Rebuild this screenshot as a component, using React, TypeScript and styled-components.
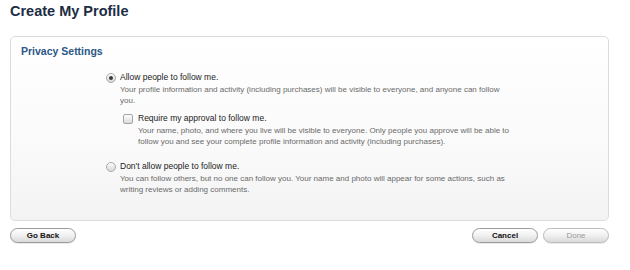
import styled, { createGlobalStyle } from "styled-components";

const GlobalStyle = createGlobalStyle`
  html, body {
    margin: 0;
    padding: 0;
    background: #fff;
    font-family: "Liberation Sans", Arial, sans-serif;
  }
`;

const StyledPage = styled.main`
  width: 630px;
  height: 270px;
  padding: 0 21px 0 10px;
  box-sizing: border-box;
`;

const StyledTitle = styled.h1`
  margin: 0;
  padding-top: 3px;
  height: 33px;
  font-size: 14.5px;
  font-weight: bold;
  color: #1c2d44;
`;

const StyledPanel = styled.section`
  height: 185px;
  box-sizing: border-box;
  border: 1px solid #dcdcdc;
  border-radius: 5px;
  background: linear-gradient(#fff 0%, #fafafa 60%, #f3f3f3 100%);
  padding: 8px 10px 0 10px;
`;

const StyledHeading = styled.h2`
  margin: 0 0 15px 0;
  font-size: 10.5px;
  font-weight: bold;
  color: #2b5787;
`;

const StyledOptions = styled.div`
  display: flex;
  flex-direction: column;
  gap: 14px;
  padding-left: 85px;
`;

const StyledOption = styled.div<{ $nested?: boolean }>`
  display: grid;
  grid-template-columns: ${(p) => (p.$nested ? "15px" : "14px")} 1fr;
  margin-top: ${(p) => (p.$nested ? "7px" : "0")};
  margin-left: ${(p) => (p.$nested ? "3px" : "0")};
`;

const StyledLabel = styled.div`
  font-size: 8.5px;
  color: #222;
  line-height: 11px;
`;

const StyledDesc = styled.div<{ $width: number }>`
  font-size: 8px;
  color: #6a6a6a;
  line-height: 11px;
  margin-top: 1px;
  max-width: ${(p) => p.$width}px;
`;

const StyledRadio = styled.span<{ $checked?: boolean }>`
  width: 8px;
  height: 8px;
  margin-top: 1px;
  border-radius: 50%;
  border: 1px solid #a9a9a9;
  background: linear-gradient(#fdfdfd, #d8d8d8);
  display: flex;
  align-items: center;
  justify-content: center;
  &::after {
    content: "";
    display: ${(p) => (p.$checked ? "block" : "none")};
    width: 4px;
    height: 4px;
    border-radius: 50%;
    background: #3a3a3a;
  }
`;

const StyledCheckbox = styled.span`
  width: 8px;
  height: 8px;
  margin-top: 1px;
  border: 1px solid #a4a4a4;
  border-radius: 2px;
  background: linear-gradient(#fdfdfd, #dcdcdc);
`;

const StyledFooter = styled.div`
  display: flex;
  align-items: center;
  gap: 5px;
  margin-top: 7px;
`;

const StyledSpacer = styled.div`
  flex: 1;
`;

const StyledButton = styled.button<{ $disabled?: boolean }>`
  width: 66px;
  height: 15px;
  padding: 0;
  border: 1px solid ${(p) => (p.$disabled ? "#bbb" : "#9a9a9a")};
  border-radius: 8px;
  background: linear-gradient(#ffffff 0%, #f0f0f0 50%, #dadada 100%);
  font-family: "Liberation Sans", Arial, sans-serif;
  font-size: 8px;
  color: ${(p) => (p.$disabled ? "#9a9a9a" : "#111")};
  font-weight: ${(p) => (p.$disabled ? "normal" : "bold")};
  box-shadow: 0 1px 0 rgba(0, 0, 0, 0.08);
`;

function App() {
  return (
    <StyledPage>
      <GlobalStyle />
      <StyledTitle>Create My Profile</StyledTitle>
      <StyledPanel>
        <StyledHeading>Privacy Settings</StyledHeading>
        <StyledOptions>
          <StyledOption>
            <StyledRadio $checked />
            <div>
              <StyledLabel>Allow people to follow me.</StyledLabel>
              <StyledDesc $width={393}>
                Your profile information and activity (including purchases)
                will be visible to everyone, and anyone can follow you.
              </StyledDesc>
              <StyledOption $nested>
                <StyledCheckbox />
                <div>
                  <StyledLabel>Require my approval to follow me.</StyledLabel>
                  <StyledDesc $width={376}>
                    Your name, photo, and where you live will be visible to
                    everyone. Only people you approve will be able to follow
                    you and see your complete profile information and activity
                    (including purchases).
                  </StyledDesc>
                </div>
              </StyledOption>
            </div>
          </StyledOption>
          <StyledOption>
            <StyledRadio />
            <div>
              <StyledLabel>Don't allow people to follow me.</StyledLabel>
              <StyledDesc $width={393}>
                You can follow others, but no one can follow you. Your name and
                photo will appear for some actions, such as writing reviews or
                adding comments.
              </StyledDesc>
            </div>
          </StyledOption>
        </StyledOptions>
      </StyledPanel>
      <StyledFooter>
        <StyledButton>Go Back</StyledButton>
        <StyledSpacer />
        <StyledButton>Cancel</StyledButton>
        <StyledButton $disabled>Done</StyledButton>
      </StyledFooter>
    </StyledPage>
  );
}

export default App;
